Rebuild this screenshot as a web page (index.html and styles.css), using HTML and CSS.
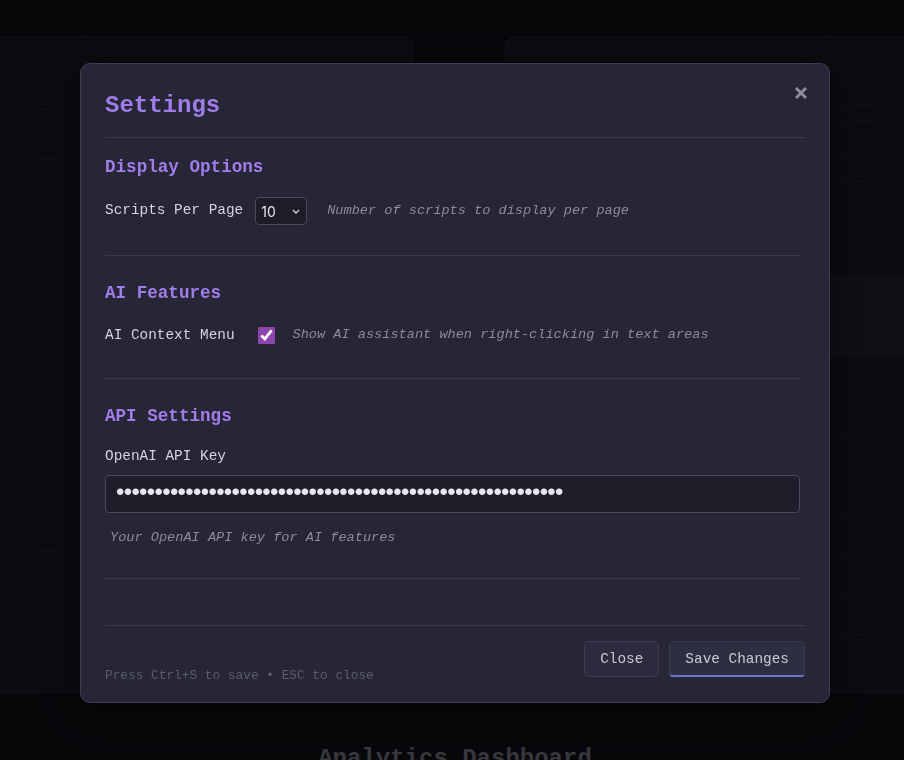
FILE: index.html
```html
<!DOCTYPE html>
<html lang="en">
<head>
<meta charset="utf-8">
<title>Settings</title>
<link rel="stylesheet" href="styles.css">
</head>
<body>
<div class="page">
  <div class="cards">
    <div class="card card-left">
      <div class="crow" style="height:73px"></div>
      <div class="crow" style="height:50px"></div>
      <div class="crow" style="height:37px"></div>
      <div class="crow" style="height:45px"></div>
      <div class="crow" style="height:261px"></div>
      <div class="crow" style="height:49px"></div>
      <div class="crow" style="height:37px"></div>
      <div class="crow" style="height:31px"></div>
      <div class="crow" style="height:72px"></div>
    </div>
    <div class="card card-right">
      <div class="crow" style="height:68px"></div>
      <div class="crow" style="height:16px"></div>
      <div class="crow" style="height:35px"></div>
      <div class="crow" style="height:26px"></div>
      <div class="crow" style="height:95px"></div>
      <div class="crow crow-hl" style="height:80px"></div>
      <div class="crow" style="height:80px"></div>
      <div class="crow" style="height:80px"></div>
      <div class="crow" style="height:39px"></div>
      <div class="crow" style="height:40px"></div>
      <div class="crow" style="height:39px"></div>
      <div class="crow" style="height:57px"></div>
    </div>
  </div>
  <h1 class="dash-title">Analytics Dashboard</h1>
</div>

<div class="overlay">
  <div class="modal">
    <button class="close-x" aria-label="Close">
      <svg width="14" height="14" viewBox="0 0 14 14"><path d="M2 2 L12 12 M12 2 L2 12" stroke="#8d8d9f" stroke-width="2.9" fill="none"/></svg>
    </button>
    <div class="modal-header">
      <h2 class="modal-title">Settings</h2>
    </div>
    <div class="modal-body">
      <section class="section">
        <h3 class="section-title">Display Options</h3>
        <div class="setting-row">
          <label class="label">Scripts Per Page</label>
          <select class="select"><option>10</option><option>20</option><option>50</option></select>
          <span class="desc">Number of scripts to display per page</span>
        </div>
      </section>
      <section class="section">
        <h3 class="section-title">AI Features</h3>
        <div class="setting-row">
          <label class="label">AI Context Menu</label>
          <input class="checkbox" type="checkbox" checked>
          <span class="desc desc-cb">Show AI assistant when right-clicking in text areas</span>
        </div>
      </section>
      <section class="section">
        <h3 class="section-title">API Settings</h3>
        <label class="label label-block">OpenAI API Key</label>
        <input class="text-input" type="password" value="sk-proj-abcdefghijklmnopqrstuvwxyz0123456789ABCDEFGHIJKLMN">
        <div class="desc desc-block">Your OpenAI API key for AI features</div>
      </section>
    </div>
    <div class="modal-footer">
      <span class="hint">Press Ctrl+S to save • ESC to close</span>
      <div class="buttons">
        <button class="btn">Close</button>
        <button class="btn btn-primary">Save Changes</button>
      </div>
    </div>
  </div>
</div>
</body>
</html>
```

FILE: styles.css
```css
* { box-sizing: border-box; }

html, body {
  margin: 0;
  padding: 0;
  height: 100%;
  overflow: hidden;
}

body {
  background: #14141c;
  font-family: "Liberation Mono", "DejaVu Sans Mono", monospace;
  color: #d4d4de;
}

/* ---------- background dashboard ---------- */
.page {
  padding-top: 36px;
}

.cards {
  display: flex;
  gap: 92px;
  margin-left: -40px;
  width: 1100px;
}

.card {
  flex-shrink: 0;
  background: #1e1e28;
  border: 1px solid #2a2a36;
  border-radius: 10px;
  overflow: hidden;
}

.card-left { width: 453px; }
.card-right { width: 520px; }

.crow {
  border-bottom: 1px solid #2a2a36;
}
.crow:last-child { border-bottom: none; }
.crow-hl { background: #262634; }

.dash-title {
  margin: 52px 0 0 6px;
  text-align: center;
  font-size: 24px;
  line-height: 28.8px;
  font-weight: 700;
  color: #8a8a98;
}

/* ---------- overlay + modal ---------- */
.overlay {
  position: fixed;
  inset: 0;
  background: rgba(0, 0, 0, 0.6);
  display: flex;
  align-items: center;
  justify-content: center;
  padding: 6px 0 0 6px;
}

.modal {
  position: relative;
  width: 750px;
  background: #262636;
  border: 1px solid #3d3d55;
  border-radius: 10px;
  padding: 24px 24px 25px;
  box-shadow: 0 10px 40px rgba(0,0,0,0.5);
}

.close-x {
  position: absolute;
  top: 22px;
  right: 21px;
  width: 14px;
  height: 14px;
  padding: 0;
  border: none;
  background: none;
  display: flex;
  cursor: pointer;
}

.modal-header {
  padding-bottom: 13px;
  border-bottom: 1px solid #3a3a4d;
}

.modal-title {
  margin: 0;
  font-size: 24px;
  line-height: 36px;
  font-weight: 700;
  color: #9f7eea;
}

.modal-body {
  padding: 16px 5px 22px 0;
}

.section {
  padding-bottom: 30px;
  border-bottom: 1px solid #3a3a4d;
  margin-bottom: 24px;
}

.section-title {
  margin: 0 0 17px;
  font-size: 17.6px;
  line-height: 26px;
  font-weight: 700;
  color: #9f7eea;
}

.setting-row {
  display: flex;
  align-items: center;
}

.label {
  font-size: 14.4px;
  line-height: 21.6px;
  color: #d4d4de;
  margin-right: 12px;
}

.label-block {
  display: block;
  margin: 0 0 7px;
}

.select {
  appearance: none;
  -webkit-appearance: none;
  width: 52px;
  height: 28px;
  padding: 0 0 0 5px;
  background-color: #1d1d2a;
  background-image: url("data:image/svg+xml,%3Csvg xmlns='http://www.w3.org/2000/svg' width='8' height='5' viewBox='0 0 8 5'%3E%3Cpath d='M1 1 L4 4 L7 1' fill='none' stroke='%23d0d0dc' stroke-width='1.4'/%3E%3C/svg%3E");
  background-repeat: no-repeat;
  background-position: right 6px center;
  color: #e4e4ee;
  border: 1px solid #47475e;
  border-radius: 4px;
  font-family: Inter, "Noto Sans", sans-serif;
  font-size: 14px;
}

.checkbox {
  width: 17px;
  height: 17px;
  margin: 4px 0 4px 11px;
  accent-color: #8e44ad;
}

.desc {
  font-size: 13.6px;
  line-height: 20.4px;
  font-style: italic;
  color: #8b8b9b;
  margin-left: 20px;
}

.desc-cb { margin-left: 18px; }

.desc-block {
  margin: 15px 0 0;
  padding-left: 5px;
}

.text-input {
  display: block;
  width: 100%;
  height: 38px;
  padding: 0 7px;
  background: #1e1e2b;
  border: 1px solid #47475e;
  border-radius: 4px;
  color: #e6e6f0;
  font-family: "Liberation Mono", monospace;
  font-size: 24px;
  letter-spacing: -6.7px;
  outline: none;
}

.modal-footer {
  border-top: 1px solid #3a3a4d;
  padding-top: 15px;
  display: flex;
  justify-content: space-between;
  align-items: flex-end;
}

.hint {
  font-size: 12.8px;
  line-height: 19px;
  color: #5c5c70;
  margin-bottom: -8px;
}

.buttons {
  display: flex;
  gap: 10px;
}

.btn {
  height: 36px;
  padding: 0 15px;
  background: #2c2c3e;
  border: 1px solid #3a3a4f;
  border-radius: 4px;
  color: #c9c9d6;
  font-family: "Liberation Mono", monospace;
  font-size: 14.4px;
  cursor: pointer;
}

.btn-primary {
  background: #2e2e41;
  border-bottom: 2px solid #6c72cf;
}
```
